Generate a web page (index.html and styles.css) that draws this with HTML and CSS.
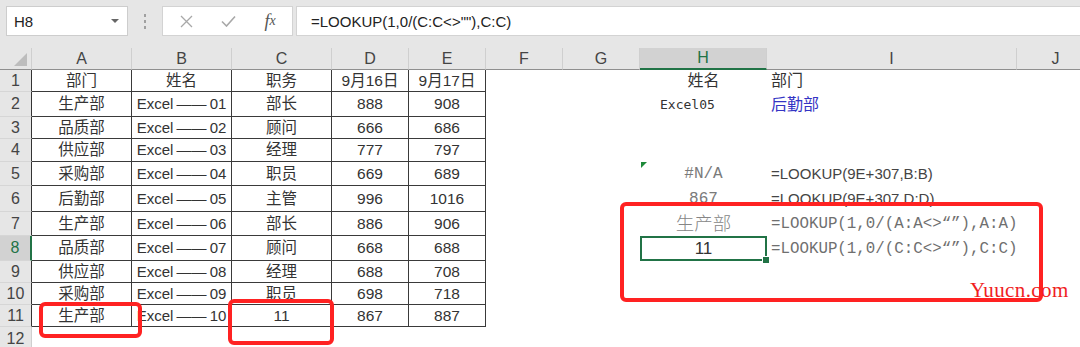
FILE: index.html
```html
<!DOCTYPE html>
<html lang="zh-CN">
<head>
    <meta charset="UTF-8">
    <title>LOOKUP</title>
    <link rel="stylesheet" href="styles.css">
</head>
<body>
<div class="page">
    <!-- 编辑栏 -->
    <div class="toolbar">
        <div class="namebox"><span>H8</span><span class="caret"></span></div>
        <div class="grip"><i></i><i></i><i></i></div>
        <div class="fxbox">
            <span class="tool">
                <svg width="13" height="13" viewBox="0 0 13 13"><path d="M1 1L12 12M12 1L1 12" stroke="#a8a8a8" stroke-width="1.3" fill="none"/></svg>
            </span>
            <span class="tool">
                <svg width="15" height="12" viewBox="0 0 15 12"><path d="M1 6.5L5.5 11L14 1.5" stroke="#a8a8a8" stroke-width="1.6" fill="none"/></svg>
            </span>
            <span class="tool fx">f<sub>x</sub></span>
        </div>
        <div class="formula">=LOOKUP(1,0/(C:C&lt;&gt;""),C:C)</div>
    </div>

    <table class="sheet">
        <colgroup>
            <col class="w-rh">
            <col class="w-100"><col class="w-100"><col class="w-100">
            <col class="w-77"><col class="w-77"><col class="w-77"><col class="w-77">
            <col class="w-h"><col class="w-i"><col class="w-j">
        </colgroup>
        <thead>
            <tr>
                <th class="corner"><span class="tri"></span></th>
                <th>A</th><th>B</th><th>C</th><th>D</th><th>E</th><th>F</th><th>G</th>
                <th class="sel">H</th><th>I</th><th>J</th>
            </tr>
        </thead>
        <tbody>
            <tr>
                <td class="rh">1</td>
                <td class="c">部门</td><td class="c">姓名</td><td class="c">职务</td><td class="c">9月16日</td><td class="c">9月17日</td>
                <td></td><td></td><td class="cjk">姓名</td><td class="left cjk">部门</td><td></td>
            </tr>
            <tr>
                <td class="rh">2</td>
                <td class="c">生产部</td><td class="c nm">Excel —— 01</td><td class="c">部长</td><td class="c">888</td><td class="c">908</td>
                <td></td><td></td><td class="name-val">Excel05</td><td class="left cjk blue">后勤部</td><td></td>
            </tr>
            <tr>
                <td class="rh">3</td>
                <td class="c">品质部</td><td class="c nm">Excel —— 02</td><td class="c">顾问</td><td class="c">666</td><td class="c">686</td>
                <td></td><td></td><td></td><td></td><td></td>
            </tr>
            <tr>
                <td class="rh">4</td>
                <td class="c">供应部</td><td class="c nm">Excel —— 03</td><td class="c">经理</td><td class="c">777</td><td class="c">797</td>
                <td></td><td></td><td></td><td></td><td></td>
            </tr>
            <tr>
                <td class="rh">5</td>
                <td class="c">采购部</td><td class="c nm">Excel —— 04</td><td class="c">职员</td><td class="c">669</td><td class="c">689</td>
                <td></td><td></td><td class="mono flag">#N/A</td><td class="left">=LOOKUP(9E+307,B:B)</td><td></td>
            </tr>
            <tr>
                <td class="rh">6</td>
                <td class="c">后勤部</td><td class="c nm">Excel —— 05</td><td class="c">主管</td><td class="c">996</td><td class="c">1016</td>
                <td></td><td></td><td class="mono">867</td><td class="left">=LOOKUP(9E+307,D:D)</td><td></td>
            </tr>
            <tr>
                <td class="rh">7</td>
                <td class="c">生产部</td><td class="c nm">Excel —— 06</td><td class="c">部长</td><td class="c">886</td><td class="c">906</td>
                <td></td><td></td><td class="big-cjk">生产部</td><td class="left mono">=LOOKUP(1,0/(A:A&lt;&gt;“”),A:A)</td><td></td>
            </tr>
            <tr>
                <td class="rh sel">8</td>
                <td class="c">品质部</td><td class="c nm">Excel —— 07</td><td class="c">顾问</td><td class="c">668</td><td class="c">688</td>
                <td></td><td></td><td class="active">11</td><td class="left mono">=LOOKUP(1,0/(C:C&lt;&gt;“”),C:C)</td><td></td>
            </tr>
            <tr>
                <td class="rh">9</td>
                <td class="c">供应部</td><td class="c nm">Excel —— 08</td><td class="c">经理</td><td class="c">688</td><td class="c">708</td>
                <td></td><td></td><td></td><td></td><td></td>
            </tr>
            <tr>
                <td class="rh">10</td>
                <td class="c">采购部</td><td class="c nm">Excel —— 09</td><td class="c">职员</td><td class="c">698</td><td class="c">718</td>
                <td></td><td></td><td></td><td></td><td></td>
            </tr>
            <tr>
                <td class="rh">11</td>
                <td class="c">生产部</td><td class="c nm">Excel —— 10</td><td class="c">11</td><td class="c">867</td><td class="c">887</td>
                <td></td><td></td><td></td><td></td><td></td>
            </tr>
            <tr>
                <td class="rh last">12</td>
                <td></td><td></td><td></td><td></td><td></td><td></td><td></td><td></td><td></td><td></td>
            </tr>
        </tbody>
    </table>

    <!-- 标注 -->
    <div class="mark mark-a"></div>
    <div class="mark mark-c"></div>
    <div class="mark mark-h"></div>
    <div class="watermark">Yuucn.com</div>
</div>
</body>
</html>
```

FILE: styles.css
```css
* {
    box-sizing: border-box;
}

body {
    margin: 0;
    background: #fff;
    font-family: "Liberation Sans", "Noto Sans CJK SC", sans-serif;
    color: #333;
}

.page {
    position: relative;
    width: 1080px;
    height: 347px;
    overflow: hidden;
}

/* 编辑栏 */
.toolbar {
    display: flex;
    align-items: flex-start;
    height: 48px;
    padding: 6px 0 0 6px;
    background: #e6e6e6;
}

.namebox {
    width: 122px;
    height: 30px;
    display: flex;
    align-items: center;
    justify-content: space-between;
    padding: 0 8px 0 7px;
    background: #fff;
    border: 1px solid #cdcdcd;
    font-size: 15px;
    color: #222;
}

.caret {
    width: 0;
    height: 0;
    border-left: 4px solid transparent;
    border-right: 4px solid transparent;
    border-top: 4px solid #666;
}

.grip {
    display: flex;
    flex-direction: column;
    gap: 3px;
    margin: 8px 16px 0 16px;
}

.grip i {
    display: block;
    width: 2px;
    height: 3px;
    background: #a0a0a0;
}

.fxbox {
    width: 131px;
    height: 30px;
    display: flex;
    align-items: center;
    padding-left: 2px;
    background: #fff;
    border: 1px solid #d3d3d3;
}

.tool {
    width: 42px;
    display: flex;
    justify-content: center;
    align-items: center;
}

.fx {
    font-family: "Liberation Serif", serif;
    font-style: italic;
    font-size: 18px;
    color: #555;
}

.fx sub {
    font-size: 14px;
    vertical-align: -1px;
}

.formula {
    flex: 1;
    height: 30px;
    margin-left: 3px;
    display: flex;
    align-items: center;
    padding-left: 14px;
    background: #fff;
    border: 1px solid #d3d3d3;
    border-right: none;
    font-size: 15px;
    color: #222;
}

/* 表格 */
.sheet {
    border-collapse: separate;
    border-spacing: 0;
    table-layout: fixed;
    width: 1095px;
}

.w-rh { width: 32px; }
.w-100 { width: 100px; }
.w-77 { width: 77px; }
.w-h { width: 127px; }
.w-i { width: 250px; }
.w-j { width: 78px; }

th {
    height: 22px;
    padding: 0;
    line-height: 18px;
    background: #e6e6e6;
    font-weight: normal;
    font-size: 16px;
    color: #444;
    border-right: 1px solid #cfcfcf;
    border-bottom: 1px solid #8f8f8f;
}

th.corner {
    position: relative;
}

.tri {
    position: absolute;
    right: 4px;
    bottom: 3px;
    width: 0;
    height: 0;
    border-left: 13px solid transparent;
    border-bottom: 13px solid #bdbdbd;
}

th.sel {
    background: #d2d2d2;
    color: #217346;
    border-bottom: 2px solid #217346;
}

td {
    padding: 0;
    line-height: 18px;
    font-size: 15.5px;
    text-align: center;
    white-space: nowrap;
    overflow: visible;
}

tbody tr:nth-child(1) { height: 22px; }
tbody tr:nth-child(2) { height: 25px; }
tbody tr:nth-child(3) { height: 22px; }
tbody tr:nth-child(4) { height: 23px; }
tbody tr:nth-child(5) { height: 24px; }
tbody tr:nth-child(6) { height: 26px; }
tbody tr:nth-child(7) { height: 24px; }
tbody tr:nth-child(8) { height: 25px; }
tbody tr:nth-child(9) { height: 22px; }
tbody tr:nth-child(10) { height: 22px; }
tbody tr:nth-child(11) { height: 22px; }
tbody tr:nth-child(12) { height: 24px; }

td.rh {
    background: #e6e6e6;
    font-size: 16px;
    color: #444;
    border-bottom: 1px solid #d6d6d6;
    border-right: 1px solid #333;
}

td.rh.sel {
    background: #d2d2d2;
    color: #217346;
    border-right: 2px solid #217346;
}

td.rh.last {
    vertical-align: top;
    padding-top: 3px;
    border-right: 1px solid #cfcfcf;
}

td.c {
    border-right: 1px solid #3a3a3a;
    border-bottom: 1px solid #3a3a3a;
}

td.nm {
    font-size: 15px;
    word-spacing: -1px;
}

td.left {
    text-align: left;
    padding-left: 4px;
    font-size: 15px;
    color: #444;
}

td.cjk {
    font-size: 16px;
    color: #333;
}

.blue {
    color: #3434c4 !important;
}

td.name-val {
    text-align: left;
    padding-left: 20px;
    font-family: "DejaVu Sans Mono", monospace;
    font-size: 13px;
    color: #333;
}

td.mono {
    font-family: "Liberation Mono", monospace;
    font-size: 16px;
    color: #7a7a7a;
}

td.left.mono {
    font-size: 15.8px;
    color: #6f6f6f;
}

td.flag {
    position: relative;
}

td.flag::before {
    content: "";
    position: absolute;
    left: 1px;
    top: 0;
    border-top: 6px solid #1e8a3a;
    border-right: 6px solid transparent;
}

td.big-cjk {
    font-size: 18.5px;
    font-weight: 300;
    color: #858585;
}

td.active {
    position: relative;
    font-size: 17px;
    color: #333;
    box-shadow: inset 0 0 0 2px #217346;
}

td.active::after {
    content: "";
    position: absolute;
    right: -3px;
    bottom: -3px;
    width: 6px;
    height: 6px;
    background: #217346;
    border: 1px solid #fff;
}

/* 红框标注 */
.mark {
    position: absolute;
    border: 4px solid #ff2222;
    border-radius: 6px;
}

.mark-a {
    left: 39px;
    top: 302px;
    width: 103px;
    height: 36px;
}

.mark-c {
    left: 228px;
    top: 299px;
    width: 106px;
    height: 46px;
}

.mark-h {
    left: 620px;
    top: 202px;
    width: 423px;
    height: 100px;
}

.watermark {
    position: absolute;
    left: 970px;
    top: 278px;
    font-family: "Liberation Serif", serif;
    font-size: 21px;
    letter-spacing: 0.4px;
    color: #f01e1e;
}
```
